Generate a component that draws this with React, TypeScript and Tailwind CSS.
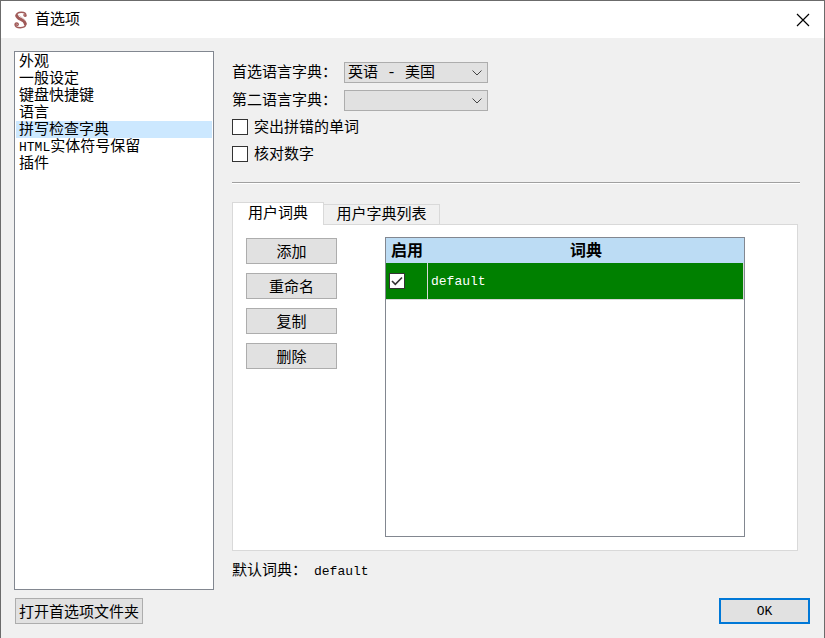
import { useState } from "react";

const sections = [
  { id: "appearance", label: "外观" },
  { id: "general", label: "一般设定" },
  { id: "shortcuts", label: "键盘快捷键" },
  { id: "language", label: "语言" },
  { id: "spellcheck", label: "拼写检查字典" },
  { id: "entities", latin: "HTML", label: "实体符号保留" },
  { id: "plugins", label: "插件" },
];

const actions = ["添加", "重命名", "复制", "删除"];

const pushButton =
  "h-[26px] border border-[#adadad] bg-[#e1e1e1] text-center font-['Noto_Sans_CJK_SC',sans-serif] leading-6 hover:border-[#0078d7] hover:bg-[#e5f1fb]";

const checkBox =
  "peer size-4 shrink-0 appearance-none border border-[#333333] bg-white";

function AppLogo() {
  return (
    <svg viewBox="0 0 14 18" className="h-[18px] w-3.5" fill="none" stroke="#a05a58" strokeLinecap="round" aria-hidden="true">
      <path d="M11.8 4.8C12.4 2.4 10.4 1.2 7.4 1.2 4.2 1.2 2.2 2.6 2.2 5" strokeWidth="1.4" />
      <path d="M2.8 4.4C2.8 8.6 11.2 8.2 11.2 12.8" strokeWidth="3" />
      <path d="M11.8 12.6C11.8 15.4 9.4 16.8 6.2 16.8 2.8 16.8 0.9 15.4 1 13.4 1.2 11.6 3.9 11.4 4.3 13.2 4.5 14.4 2.8 14.8 2.4 13.8" strokeWidth="1.4" />
      <path d="M11.9 4.8C10.8 5.8 9.4 4.6 10.2 3.4" strokeWidth="1.4" />
      <path d="M4.8 4.2C6 6.4 9.6 6.6 11 9.4" stroke="#d0acaa" strokeWidth="0.7" />
    </svg>
  );
}

type ComboProps = { id: string; label: string; options: string[] };

function Combo({ id, label, options }: ComboProps) {
  return (
    <div className="flex items-center">
      <label htmlFor={id} className="w-28 shrink-0 pt-0.5">
        {label}
      </label>
      <div className="relative">
        <select
          id={id}
          className="block h-[21px] w-36 appearance-none border border-[#adadad] bg-[#e1e1e1] pt-0.5 pl-[3px] leading-[17px]"
        >
          {options.map((option) => (
            <option key={option}>{option}</option>
          ))}
        </select>
        <svg
          viewBox="0 0 10 6"
          className="pointer-events-none absolute top-2 right-1.5 h-1.5 w-2.5"
          fill="none"
          stroke="#444444"
          aria-hidden="true"
        >
          <path d="M0.5 0.5L5 5L9.5 0.5" />
        </svg>
      </div>
    </div>
  );
}

function Check({ label }: { label: string }) {
  return (
    <label className="flex h-4 items-center gap-1.5">
      <span className="relative flex">
        <input type="checkbox" className={checkBox} />
        <CheckMark />
      </span>
      <span className="pt-0.5">{label}</span>
    </label>
  );
}

function CheckMark() {
  return (
    <svg
      viewBox="0 0 16 16"
      className="pointer-events-none absolute inset-0 hidden size-4 peer-checked:block"
      fill="none"
      stroke="#333333"
      strokeWidth="1.6"
      aria-hidden="true"
    >
      <path d="M3 8L6.3 11.3L13 4.5" />
    </svg>
  );
}

export default function App() {
  const [section, setSection] = useState("spellcheck");
  const [enabled, setEnabled] = useState(true);
  const [tab, setTab] = useState("dict");

  return (
    <div className="flex min-h-screen flex-col border-x border-t border-[#6b6b6b] bg-[#f0f0f0] font-['Liberation_Mono','Noto_Sans_CJK_SC',monospace] text-[15px] leading-[17px] text-black">
      <header className="flex h-[37px] items-center bg-white pr-3.5 pl-[13px]">
        <AppLogo />
        <h1 className="ml-[7px] pt-0.5">首选项</h1>
        <button type="button" aria-label="关闭" className="ml-auto">
          <svg viewBox="0 0 14 14" className="size-3.5" stroke="black" strokeWidth="1.2" aria-hidden="true">
            <path d="M1 1L13 13M13 1L1 13" />
          </svg>
        </button>
      </header>

      <main className="flex flex-1 gap-[18px] pt-[13px] pr-6 pl-[13px]">
        <ul className="w-[200px] shrink-0 border border-[#828790] bg-white p-px">
          {sections.map((item) => (
            <li key={item.id}>
              <button
                type="button"
                onClick={() => setSection(item.id)}
                className={`flex h-[17px] w-full items-baseline pt-px pl-[3px] text-left ${
                  section === item.id ? "bg-[#cce8ff]" : ""
                }`}
              >
                {item.latin && <span className="text-[13px]">{item.latin}</span>}
                {item.label}
              </button>
            </li>
          ))}
        </ul>

        <div className="flex min-w-0 flex-1 flex-col">
          <div className="flex flex-col gap-[7px] pt-[11px]">
            <Combo id="primary" label="首选语言字典：" options={["英语 - 美国"]} />
            <Combo id="secondary" label="第二语言字典：" options={[""]} />
          </div>
          <div className="mt-2 flex flex-col gap-[11px]">
            <Check label="突出拼错的单词" />
            <Check label="核对数字" />
          </div>
          <hr className="mt-5 h-0.5 border-t border-b border-t-[#a0a0a0] border-b-white" />

          <div role="tablist" className="mt-[18px] flex items-end">
            <button
              type="button"
              role="tab"
              aria-selected={tab === "dict"}
              onClick={() => setTab("dict")}
              className="z-10 -mb-px h-[23px] w-[92px] border border-b-0 border-[#d9d9d9] bg-white"
            >
              用户词典
            </button>
            <button
              type="button"
              role="tab"
              aria-selected={tab === "list"}
              onClick={() => setTab("list")}
              className="h-5 w-[116px] border border-b-0 border-l-0 border-[#d9d9d9] pt-0.5"
            >
              用户字典列表
            </button>
          </div>

          <div
            role="tabpanel"
            className="mr-0.5 flex flex-1 gap-12 border border-[#d9d9d9] bg-white pt-3 pr-[52px] pb-[13px] pl-[13px]"
          >
            <div className="flex w-[91px] shrink-0 flex-col gap-[9px] pt-px">
              {actions.map((action) => (
                <button key={action} type="button" className={pushButton}>
                  {action}
                </button>
              ))}
            </div>
            <div className="min-w-0 flex-1 border border-[#828790] bg-white">
              <table className="w-full table-fixed border-separate border-spacing-0">
                <thead>
                  <tr className="h-[25px] bg-[#bcdcf4] text-base leading-5">
                    <th className="w-[42px] p-0 pt-0.5 font-bold">启用</th>
                    <th className="p-0 pt-0.5 font-bold">词典</th>
                  </tr>
                </thead>
                <tbody>
                  <tr className="h-[37px] bg-[#008000] text-[13px] text-white">
                    <td className="border-r border-b border-[#d8d8d8] p-0 pl-[3px]">
                      <span className="relative flex size-4">
                        <input
                          type="checkbox"
                          aria-label="启用 default"
                          checked={enabled}
                          onChange={(event) => setEnabled(event.target.checked)}
                          className={checkBox}
                        />
                        <CheckMark />
                      </span>
                    </td>
                    <td className="border-r border-b border-[#d8d8d8] p-0 pl-[3px]">default</td>
                  </tr>
                </tbody>
              </table>
            </div>
          </div>

          <p className="flex h-[39px] items-center gap-[7px] pt-0.5">
            默认词典：<span className="text-[13px]">default</span>
          </p>
        </div>
      </main>

      <footer className="flex items-center justify-between px-3.5 pt-2 pb-3.5">
        <button type="button" className={`${pushButton} px-[3px]`}>
          打开首选项文件夹
        </button>
        <button
          type="button"
          className="h-[26px] w-[91px] border-2 border-[#0078d7] bg-[#e1e1e1] text-[13px]"
        >
          OK
        </button>
      </footer>
    </div>
  );
}
